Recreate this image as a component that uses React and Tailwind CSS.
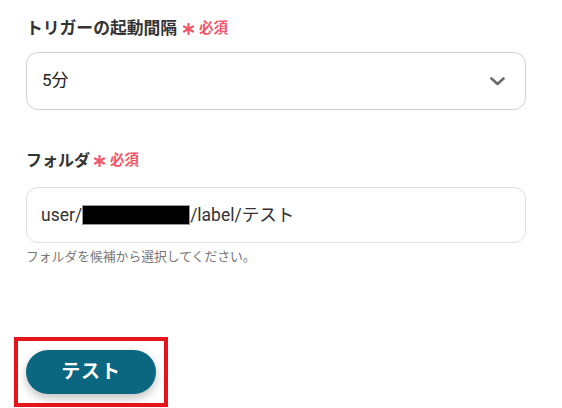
import React from "react";

const font = { fontFamily: 'Roboto, "Noto Sans CJK JP", sans-serif' };

function Required({ gap }) {
  return (
    <span className={`${gap} inline-flex items-center text-[#f2566a] font-bold text-[14.5px]`}>
      <svg width="13" height="12" viewBox="0 0 13 12" className="mr-[4px]">
        <g stroke="#f2566a" strokeWidth="2.2" strokeLinecap="round">
          <path d="M6.5 1 V11" />
          <path d="M2 3.5 L11 8.5" />
          <path d="M11 3.5 L2 8.5" />
        </g>
      </svg>
      必須
    </span>
  );
}

export default function App() {
  return (
    <div className="min-h-screen bg-white text-[#333]" style={font}>
      <div className="flex flex-col pl-[26px] pt-[17px] w-[526px]">
        <label className="flex items-center h-[24px] text-[16.8px] font-bold text-[#333]">
          トリガーの起動間隔
          <Required gap="ml-[5px]" />
        </label>
        <div className="mt-[11px] h-[58px] w-[500px] rounded-[12px] border border-[#cfcfcf] flex items-center justify-between pl-[15px] pr-[20px]">
          <span className="text-[17px] text-[#222]">5分</span>
          <svg width="15" height="9" viewBox="0 0 15 9" fill="none">
            <path d="M1.5 1.5 L7.5 7 L13.5 1.5" stroke="#6b6b6b" strokeWidth="2.6" strokeLinecap="round" strokeLinejoin="round" />
          </svg>
        </div>

        <label className="mt-[39px] flex items-center h-[24px] text-[16px] font-bold text-[#333]">
          フォルダ
          <Required gap="ml-[3px]" />
        </label>
        <div className="mt-[14px] h-[56px] w-[500px] rounded-[12px] border border-[#dedfe3] flex items-center pl-[14px]">
          <span className="text-[17.5px] text-[#333] flex items-center">
            user/
            <span className="inline-block w-[108px] h-[20px] bg-black border border-[#999]"></span>
            /label/テスト
          </span>
        </div>
        <p className="mt-[5px] text-[12.8px] leading-[18px] text-[#777]">
          フォルダを候補から選択してください。
        </p>

        <div className="mt-[71px] -ml-[12px] w-[154px] border-4 border-[#e5141b] pl-[8px] pt-[9px] pb-[9px]">
          <button className="w-[130px] h-[44px] rounded-full bg-[#0b6680] text-white text-[19px] font-bold tracking-[0.04em] shadow-[0_4px_10px_rgba(0,0,0,0.25)]">
            テスト
          </button>
        </div>
      </div>
    </div>
  );
}
